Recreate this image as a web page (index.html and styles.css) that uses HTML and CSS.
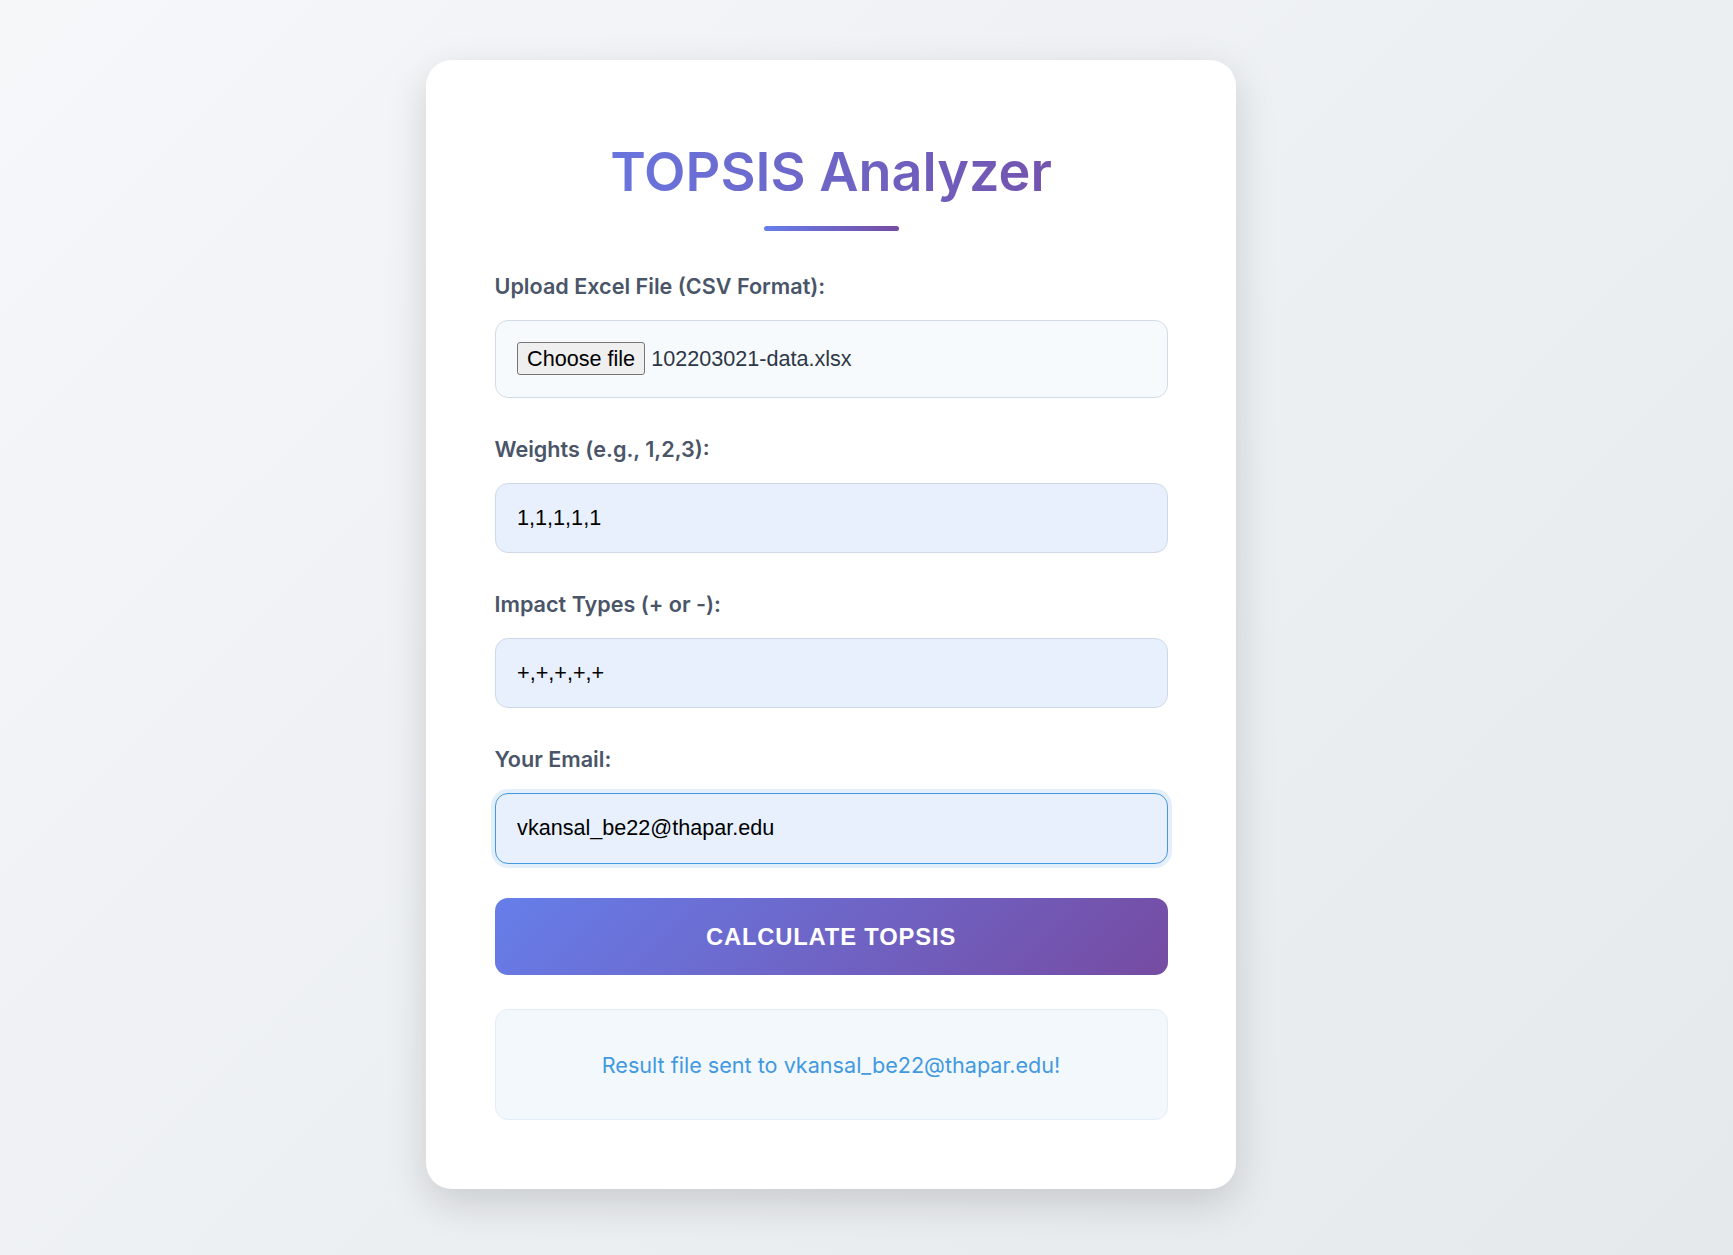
FILE: index.html
```html
<!DOCTYPE html>
<html lang="en">
<head>
<meta charset="utf-8">
<title>TOPSIS Analyzer</title>
<link rel="stylesheet" href="styles.css">
</head>
<body>
<main class="page">
  <section class="card">
    <h1 class="title">TOPSIS Analyzer</h1>
    <div class="title-rule"></div>
    <form class="form">
      <div class="group">
        <label class="label">Upload Excel File (CSV Format):</label>
        <div class="file-box">
          <button type="button" class="file-btn">Choose file</button>
          <span class="file-name">102203021-data.xlsx</span>
        </div>
      </div>
      <div class="group">
        <label class="label">Weights (e.g., 1,2,3):</label>
        <input class="field" type="text" value="1,1,1,1,1">
      </div>
      <div class="group">
        <label class="label">Impact Types (+ or -):</label>
        <input class="field" type="text" value="+,+,+,+,+">
      </div>
      <div class="group group--last">
        <label class="label">Your Email:</label>
        <input class="field field--focus" type="email" value="vkansal_be22@thapar.edu">
      </div>
      <button type="button" class="submit">Calculate TOPSIS</button>
    </form>
    <div class="result">Result file sent to vkansal_be22@thapar.edu!</div>
  </section>
</main>
</body>
</html>
```

FILE: styles.css
```css
* { box-sizing: border-box; }

html, body {
  margin: 0;
  padding: 0;
}

body {
  min-height: 1255px;
  background: linear-gradient(135deg, #f5f7f9 0%, #e5e9ec 100%);
  font-family: "Inter", "Liberation Sans", sans-serif;
}

.page {
  padding: 60px 0 67px 426px;
}

.card {
  width: 810px;
  height: 1129px;
  background: #ffffff;
  border-radius: 26px;
  padding: 79px 68.5px 68px;
  box-shadow: 0 14px 40px rgba(0, 0, 0, 0.15);
}

.title {
  margin: 0;
  font-family: "Inter", sans-serif;
  font-weight: 600;
  font-size: 54px;
  line-height: 65px;
  text-align: center;
  background: linear-gradient(90deg, #667eea 0%, #764ba2 100%);
  -webkit-background-clip: text;
  background-clip: text;
  color: transparent;
}

.title-rule {
  width: 135px;
  height: 5px;
  margin: 22px auto 0;
  border-radius: 3px;
  background: linear-gradient(90deg, #667eea 0%, #764ba2 100%);
}

.form {
  margin-top: 42px;
  display: flex;
  flex-direction: column;
}

.group {
  display: flex;
  flex-direction: column;
  margin-bottom: 38px;
}

.group--last {
  margin-bottom: 34.5px;
}

.label {
  font-family: "Inter", sans-serif;
  font-weight: 600;
  font-size: 21.6px;
  line-height: 26px;
  color: #4a5568;
  margin-bottom: 21px;
}

.file-box {
  height: 77.5px;
  display: flex;
  align-items: center;
  padding: 0 21.6px;
  background: #f7fafc;
  border: 1px solid #d3dce6;
  border-radius: 13px;
}

.file-btn {
  font-family: "Liberation Sans", Arial, sans-serif;
  font-size: 21.6px;
  line-height: 25px;
  color: #000;
  background: #efefef;
  border: 1px solid #767676;
  border-radius: 3px;
  padding: 3px 9px;
  margin: 0 6px 0 0;
  height: 33px;
}

.file-name {
  font-family: "Liberation Sans", Arial, sans-serif;
  font-size: 21.6px;
  color: #2d3748;
}

.field {
  height: 70.4px;
  padding: 0 21.6px;
  font-family: "Liberation Sans", Arial, sans-serif;
  font-size: 21.6px;
  color: #000;
  background: #e8f0fe;
  border: 1px solid #cfd9e6;
  border-radius: 13px;
  outline: none;
}

.field--focus {
  border-color: #4299e1;
  box-shadow: 0 0 0 4px rgba(66, 153, 225, 0.15);
}

.submit {
  height: 77px;
  width: 100%;
  border: none;
  border-radius: 13px;
  background: linear-gradient(135deg, #667eea 0%, #764ba2 100%);
  color: #ffffff;
  font-family: "Liberation Sans", Arial, sans-serif;
  font-weight: 700;
  font-size: 23.76px;
  letter-spacing: 0.85px;
  text-transform: uppercase;
  cursor: pointer;
}

.result {
  margin-top: 34.3px;
  height: 111px;
  display: flex;
  align-items: center;
  justify-content: center;
  background: #f3f8fc;
  border: 1px solid #e2edf8;
  border-radius: 13px;
  font-family: "Inter", sans-serif;
  font-size: 21.6px;
  line-height: 26px;
  color: #4299e1;
}
```
